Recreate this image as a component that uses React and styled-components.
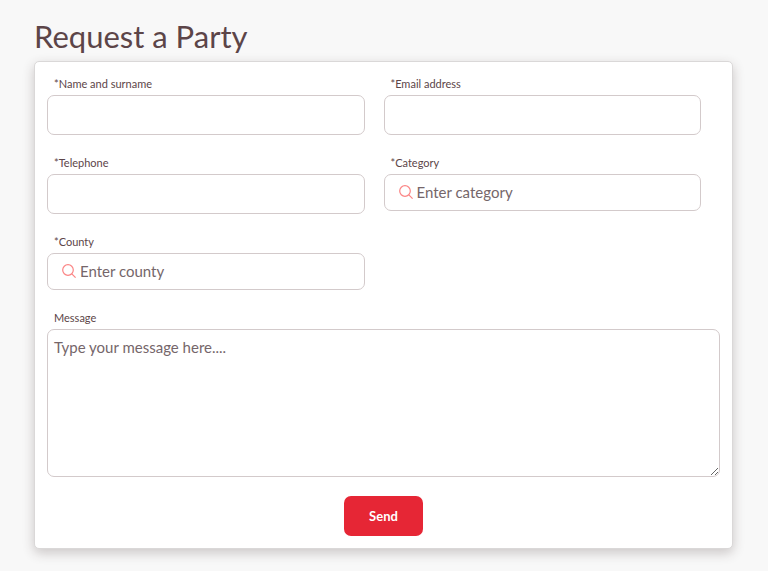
import styled, { createGlobalStyle } from "styled-components";

const GlobalStyle = createGlobalStyle`
  * {
    box-sizing: border-box;
  }
  body {
    margin: 0;
    background: #f8f8f8;
    color: #5c4548;
    font-family: Lato, "Open Sans", sans-serif;
  }
`;

const Page = styled.main`
  padding: 18px 35px 22px 34px;
`;

const Title = styled.h1`
  margin: 0 0 7px 0;
  font-size: 31px;
  font-weight: 400;
  line-height: 36px;
`;

const Form = styled.form`
  padding: 13px 12px 12px 12px;
  background: white;
  border: 1px solid #dad8d8;
  border-radius: 5px;
  box-shadow: 0 4px 12px rgba(60, 40, 40, 0.24);
`;

const Fields = styled.div`
  display: grid;
  grid-template-columns: 1fr 1fr;
  align-items: start;
  row-gap: 19px;
`;

const Field = styled.div`
  padding-right: ${(props) => (props.$wide ? "0" : "19px")};
  grid-column: ${(props) => (props.$wide ? "1 / -1" : "auto")};
`;

const Label = styled.label`
  display: block;
  margin-bottom: 2px;
  padding-left: 7px;
  font-size: 11px;
  line-height: 18px;
`;

const Input = styled.input`
  display: block;
  width: 100%;
  height: 40px;
  padding: 0 6px;
  border: 1px solid #d3cacb;
  border-radius: 7px;
  background: white;
  color: inherit;
  font-family: inherit;
  font-size: 15px;
`;

const SearchBox = styled.div`
  display: flex;
  align-items: center;
  gap: 4px;
  height: 37px;
  padding: 0 14px 2px 14px;
  border: 1px solid #d3cacb;
  border-radius: 7px;
`;

const SearchInput = styled.input`
  flex: 1;
  min-width: 0;
  padding: 0;
  border: none;
  outline: none;
  background: none;
  color: inherit;
  font-family: inherit;
  font-size: 15px;
  &::placeholder {
    color: #75666a;
    opacity: 1;
  }
`;

const Message = styled.textarea`
  display: block;
  width: 100%;
  height: 148px;
  padding: 7px 6px;
  border: 1px solid #d3cacb;
  border-radius: 7px;
  color: inherit;
  font-family: inherit;
  font-size: 15px;
  line-height: 20px;
  resize: both;
  &::placeholder {
    color: #75666a;
    opacity: 1;
  }
`;

const SendButton = styled.button`
  display: block;
  margin: 19px auto 0 auto;
  padding: 0 25px;
  height: 40px;
  border: none;
  border-radius: 7px;
  background: #e62635;
  color: white;
  font-family: inherit;
  font-size: 13px;
  font-weight: 700;
  cursor: pointer;
`;

const SearchIcon = () => (
  <svg
    width="14"
    height="14"
    viewBox="0 0 14 14"
    fill="none"
    stroke="#fb8585"
    strokeWidth="1.2"
  >
    <circle cx="6" cy="6" r="5.3" />
    <path d="M9.8 9.8 L13.6 13.6" />
  </svg>
);

const TextField = ({ id, label, type = "text" }) => (
  <Field>
    <Label htmlFor={id}>{label}</Label>
    <Input id={id} name={id} type={type} />
  </Field>
);

const SearchField = ({ id, label, placeholder }) => (
  <Field>
    <Label htmlFor={id}>{label}</Label>
    <SearchBox>
      <SearchIcon />
      <SearchInput id={id} name={id} placeholder={placeholder} />
    </SearchBox>
  </Field>
);

export default function App() {
  const handleSubmit = (event) => {
    event.preventDefault();
  };

  return (
    <>
      <GlobalStyle />
      <Page>
        <Title>Request a Party</Title>
        <Form onSubmit={handleSubmit}>
          <Fields>
            <TextField id="name" label="*Name and surname" />
            <TextField id="email" label="*Email address" type="email" />
            <TextField id="telephone" label="*Telephone" type="tel" />
            <SearchField
              id="category"
              label="*Category"
              placeholder="Enter category"
            />
            <SearchField
              id="county"
              label="*County"
              placeholder="Enter county"
            />
            <Field $wide>
              <Label htmlFor="message">Message</Label>
              <Message
                id="message"
                name="message"
                placeholder="Type your message here...."
              />
            </Field>
          </Fields>
          <SendButton type="submit">Send</SendButton>
        </Form>
      </Page>
    </>
  );
}
